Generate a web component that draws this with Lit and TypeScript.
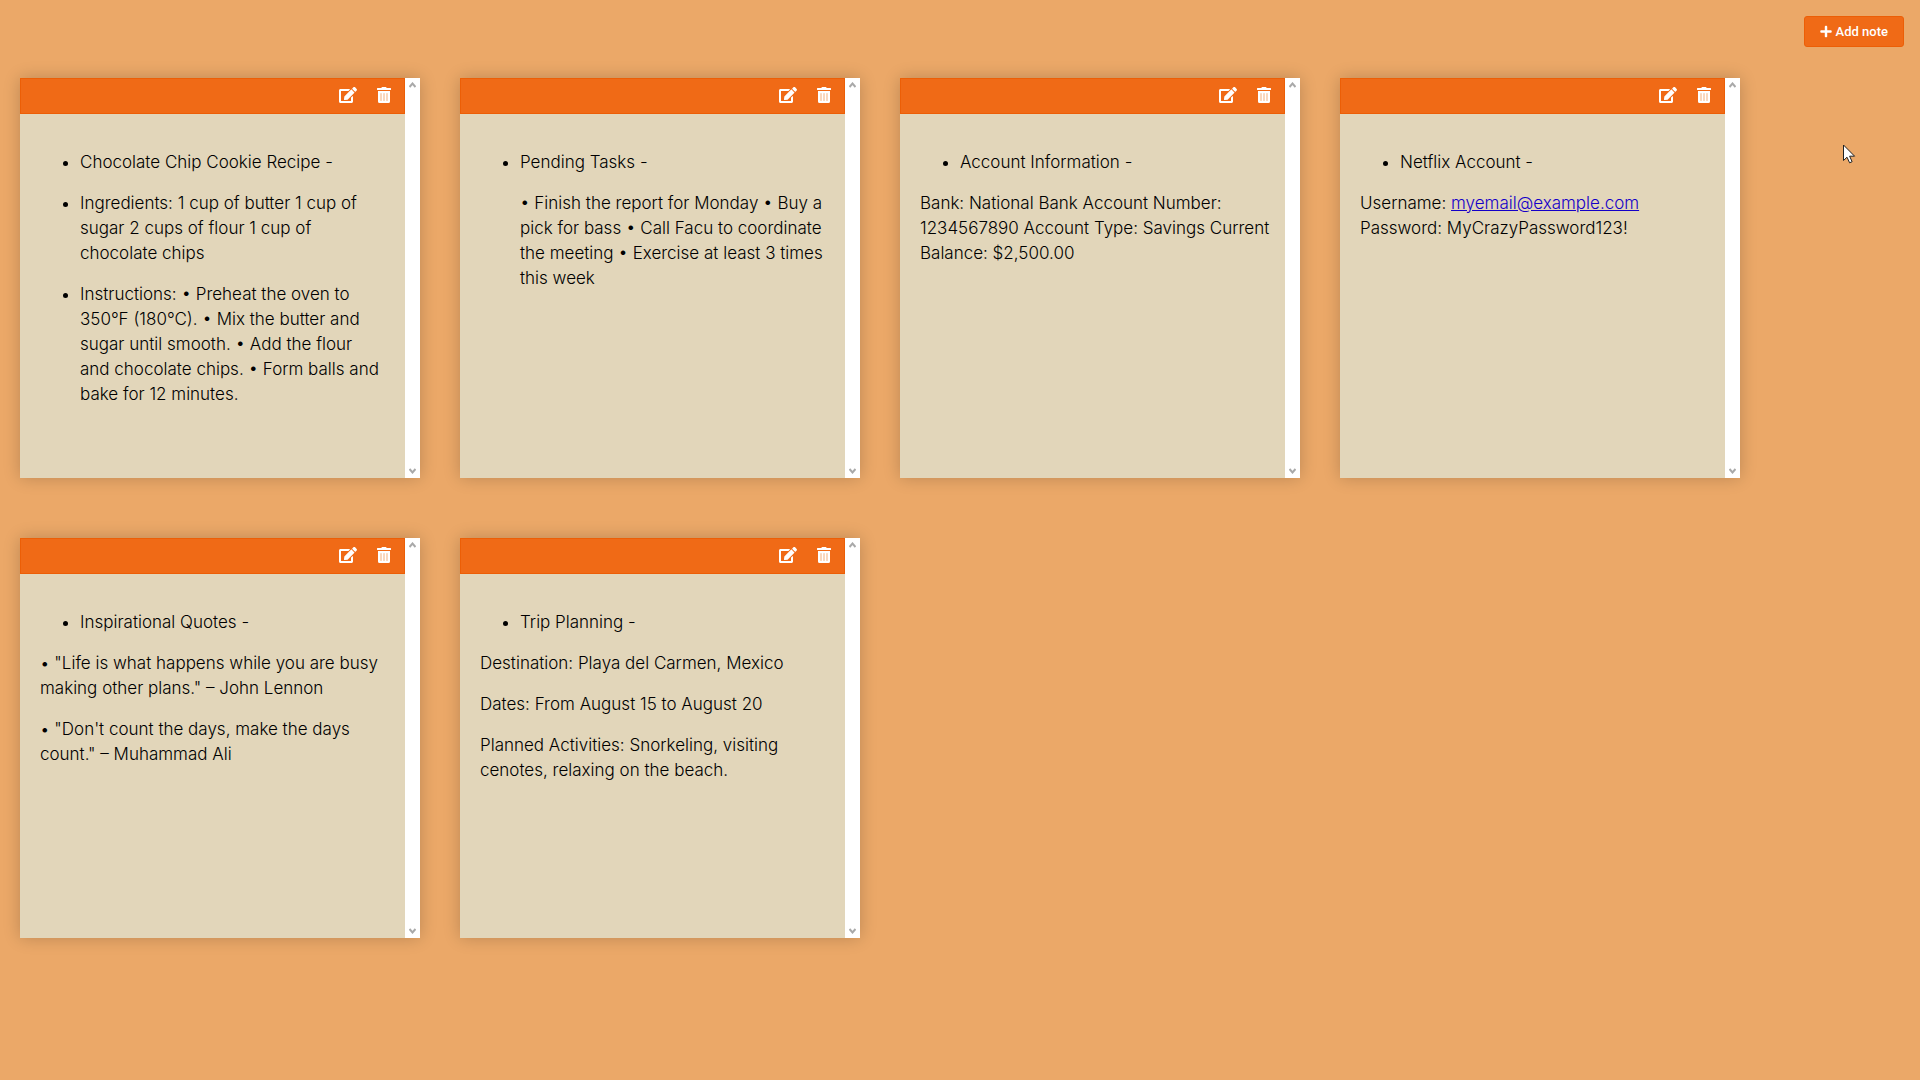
import { LitElement, html, css, svg, TemplateResult } from "lit";
import { customElement, property } from "lit/decorators.js";

const editIcon = svg`<path d="M402.6 83.2l90.2 90.2c3.800 3.800 3.800 10 0 13.800L274.400 405.600l-92.800 10.300c-12.400 1.400-22.900-9.100-21.500-21.500l10.300-92.800L388.800 83.200c3.800-3.800 10-3.800 13.800 0zm162-22.900l-48.800-48.800c-15.200-15.200-39.900-15.200-55.200 0l-35.400 35.400c-3.800 3.800-3.800 10 0 13.800l90.200 90.200c3.800 3.800 10 3.800 13.800 0l35.400-35.400c15.200-15.300 15.200-40 0-55.200zM384 346.200V448H64V128h229.800c3.200 0 6.200-1.300 8.500-3.500l40-40c7.600-7.600 2.200-20.500-8.500-20.500H48C21.500 64 0 85.500 0 112v352c0 26.500 21.500 48 48 48h352c26.500 0 48-21.500 48-48V306.200c0-10.700-12.900-16-20.500-8.500l-40 40c-2.200 2.300-3.500 5.300-3.500 8.500z"/>`;
const trashIcon = svg`<rect class="slots" x="80" y="170" width="288" height="290"/><path d="M32 464a48 48 0 0 0 48 48h288a48 48 0 0 0 48-48V128H32zm272-256a16 16 0 0 1 32 0v224a16 16 0 0 1-32 0zm-96 0a16 16 0 0 1 32 0v224a16 16 0 0 1-32 0zm-96 0a16 16 0 0 1 32 0v224a16 16 0 0 1-32 0zM432 32H312l-9.400-18.700A24 24 0 0 0 281.100 0H166.800a23.720 23.720 0 0 0-21.400 13.300L136 32H16A16 16 0 0 0 0 48v32a16 16 0 0 0 16 16h416a16 16 0 0 0 16-16V48a16 16 0 0 0-16-16z"/>`;
const plusIcon = svg`<path d="M416 208H272V64c0-17.670-14.330-32-32-32h-32c-17.670 0-32 14.330-32 32v144H32c-17.670 0-32 14.330-32 32v32c0 17.670 14.330 32 32 32h144v144c0 17.670 14.330 32 32 32h32c17.670 0 32-14.330 32-32V304h144c17.670 0 32-14.330 32-32v-32c0-17.670-14.330-32-32-32z"/>`;

const notes: TemplateResult[] = [
  html`<ul>
    <li><p>Chocolate Chip Cookie Recipe -</p></li>
    <li><p>Ingredients: 1 cup of butter 1 cup of<br>sugar 2 cups of flour 1 cup of<br>chocolate chips</p></li>
    <li><p>Instructions: • Preheat the oven to<br>350°F (180°C). • Mix the butter and<br>sugar until smooth. • Add the flour<br>and chocolate chips. • Form balls and<br>bake for 12 minutes.</p></li>
  </ul>`,
  html`<ul>
    <li><p>Pending Tasks -</p>
      <p>• Finish the report for Monday • Buy a<br>pick for bass • Call Facu to coordinate<br>the meeting • Exercise at least 3 times<br>this week</p></li>
  </ul>`,
  html`<ul><li>Account Information -</li></ul>
    <p>Bank: National Bank Account Number:<br>1234567890 Account Type: Savings Current<br>Balance: $2,500.00</p>`,
  html`<ul><li>Netflix Account -</li></ul>
    <p>Username: <a href="mailto:myemail@example.com">myemail@example.com</a><br>Password: MyCrazyPassword123!</p>`,
  html`<ul><li>Inspirational Quotes -</li></ul>
    <p>• "Life is what happens while you are busy<br>making other plans." – John Lennon</p>
    <p>• "Don't count the days, make the days<br>count." – Muhammad Ali</p>`,
  html`<ul><li>Trip Planning -</li></ul>
    <p>Destination: Playa del Carmen, Mexico</p>
    <p>Dates: From August 15 to August 20</p>
    <p>Planned Activities: Snorkeling, visiting<br>cenotes, relaxing on the beach.</p>`,
];

@customElement("note-card")
export class NoteCard extends LitElement {
  @property({ attribute: false }) content: TemplateResult = html``;

  static styles = css`
    :host {
      display: flex;
      width: 400px;
      height: 400px;
      box-shadow: 0 0 16px rgba(0, 0, 0, 0.2);
    }
    .note {
      flex: 1;
      min-width: 0;
      display: flex;
      flex-direction: column;
      background: #e2d6ba;
    }
    .tools {
      display: flex;
      justify-content: flex-end;
      align-items: flex-start;
      gap: 16px;
      height: 36px;
      box-sizing: border-box;
      padding: 8px 10px;
      background: #f06a16;
      border: 1px solid #ec5e06;
    }
    .tool {
      display: flex;
      justify-content: center;
      width: 20px;
      padding: 0;
      border: 0;
      background: none;
      color: #fff;
      cursor: pointer;
    }
    .tool svg {
      height: 16px;
      fill: currentColor;
    }
    .tool .slots {
      fill: #f5b27c;
    }
    .body {
      flex: 1;
      padding: 20px 20px 0;
      line-height: 25px;
      white-space: nowrap;
    }
    ul,
    p {
      margin: 16px 0;
    }
    ul {
      padding-left: 40px;
    }
    a {
      color: #1400c8;
    }
    .scroll {
      display: flex;
      flex-direction: column;
      justify-content: space-between;
      width: 15px;
      background: #fff;
    }
    .arrow {
      display: flex;
      justify-content: center;
      padding: 4px 0;
      border: 0;
      background: none;
    }
    .arrow svg {
      width: 7px;
      height: 6px;
      fill: none;
      stroke: #a9a9a9;
      stroke-width: 2;
    }
  `;

  render() {
    return html`
      <article class="note">
        <header class="tools">
          <button class="tool" aria-label="Edit note"><svg viewBox="0 0 576 512">${editIcon}</svg></button>
          <button class="tool" aria-label="Delete note"><svg viewBox="0 0 448 512">${trashIcon}</svg></button>
        </header>
        <div class="body">${this.content}</div>
      </article>
      <div class="scroll">
        <button class="arrow" aria-label="Scroll up"><svg viewBox="0 0 7 6"><path d="M.5 5L3.500 1.500 6.500 5" /></svg></button>
        <button class="arrow" aria-label="Scroll down"><svg viewBox="0 0 7 6"><path d="M.5 1L3.500 4.500 6.500 1" /></svg></button>
      </div>
    `;
  }
}

@customElement("app-root")
export class AppRoot extends LitElement {
  static styles = css`
    :host {
      display: block;
      position: relative;
      box-sizing: border-box;
      min-height: 100vh;
      background: #eba868;
      color: #000;
      font: 300 17px/25px Inter, "Open Sans", sans-serif;
    }
    .top {
      display: flex;
      justify-content: flex-end;
      padding: 16px;
    }
    .add {
      display: flex;
      align-items: center;
      gap: 4px;
      padding: 7px 15px;
      border: 1px solid #ec5e06;
      border-radius: 3px;
      background: #f06a16;
      color: #fff;
      font: 500 13px/15px Roboto, Arial, sans-serif;
      cursor: pointer;
    }
    .add svg {
      width: 12px;
      height: 13px;
      fill: currentColor;
    }
    .board {
      display: flex;
      flex-wrap: wrap;
      gap: 60px 40px;
      padding: 15px 20px 20px;
    }
    .pointer {
      position: absolute;
      left: 1843px;
      top: 144px;
      width: 13px;
      height: 20px;
      pointer-events: none;
    }
  `;

  render() {
    return html`
      <div class="top">
        <button class="add"><svg viewBox="0 0 448 512">${plusIcon}</svg>Add note</button>
      </div>
      <main class="board">${notes.map((n) => html`<note-card .content=${n}></note-card>`)}</main>
      <svg class="pointer" viewBox="0 0 13 20">
        <path d="M.5 1v15.500l3.500-3.300 2.600 5.600 2.500-1.100-2.500-5.500h5z" fill="#fff" stroke="#222" />
      </svg>
    `;
  }
}
